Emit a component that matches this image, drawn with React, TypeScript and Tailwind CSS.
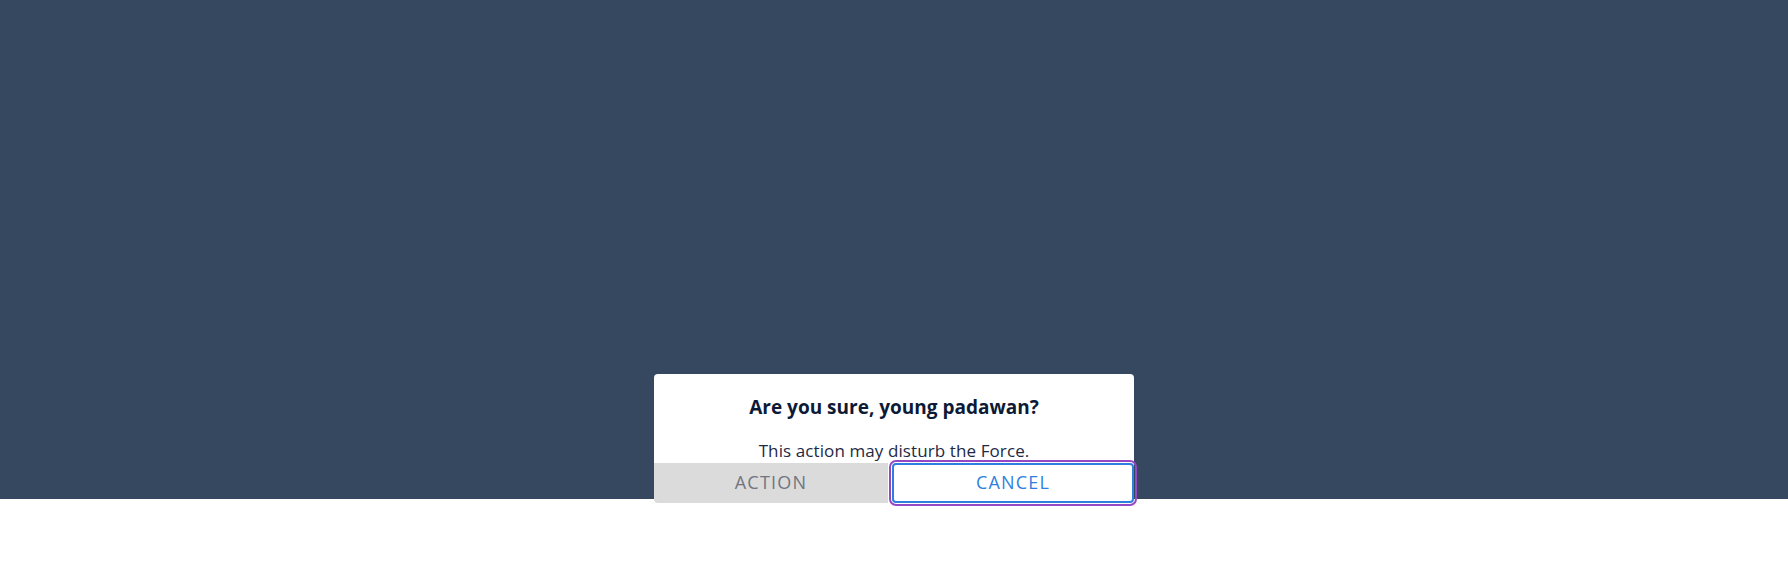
export default function App() {
  return (
    <div className="h-[574px] w-full bg-white" style={{ fontFamily: '"Open Sans", sans-serif' }}>
      <div className="flex h-[499px] w-full justify-center bg-[#364760]">
        {/* dialog */}
        <div className="relative z-10 mt-[374px] flex h-[129px] w-[480px] flex-col rounded bg-white">
          <h2 className="pt-[20px] text-center text-[19px] font-bold leading-[26px] text-[#0d1a36]">
            Are you sure, young padawan?
          </h2>
          <p className="mt-[19px] text-center text-[17px] leading-[24px] tracking-[0.1px] text-[#1e2944]">
            This action may disturb the Force.
          </p>
          <div className="flex h-[40px]">
            <button className="w-[234px] rounded-bl bg-[#dbdbdb] pb-[1px] text-[18px] tracking-[1.2px] text-[#717582]">
              ACTION
            </button>
            <button className="ml-[4px] flex-1 rounded border-2 border-[#2f7fe0] bg-white pb-[1px] text-[18px] tracking-[1.2px] text-[#2f7fe0] outline-2 outline-offset-1 outline-[#9548c4]">
              CANCEL
            </button>
          </div>
        </div>
      </div>
    </div>
  );
}
